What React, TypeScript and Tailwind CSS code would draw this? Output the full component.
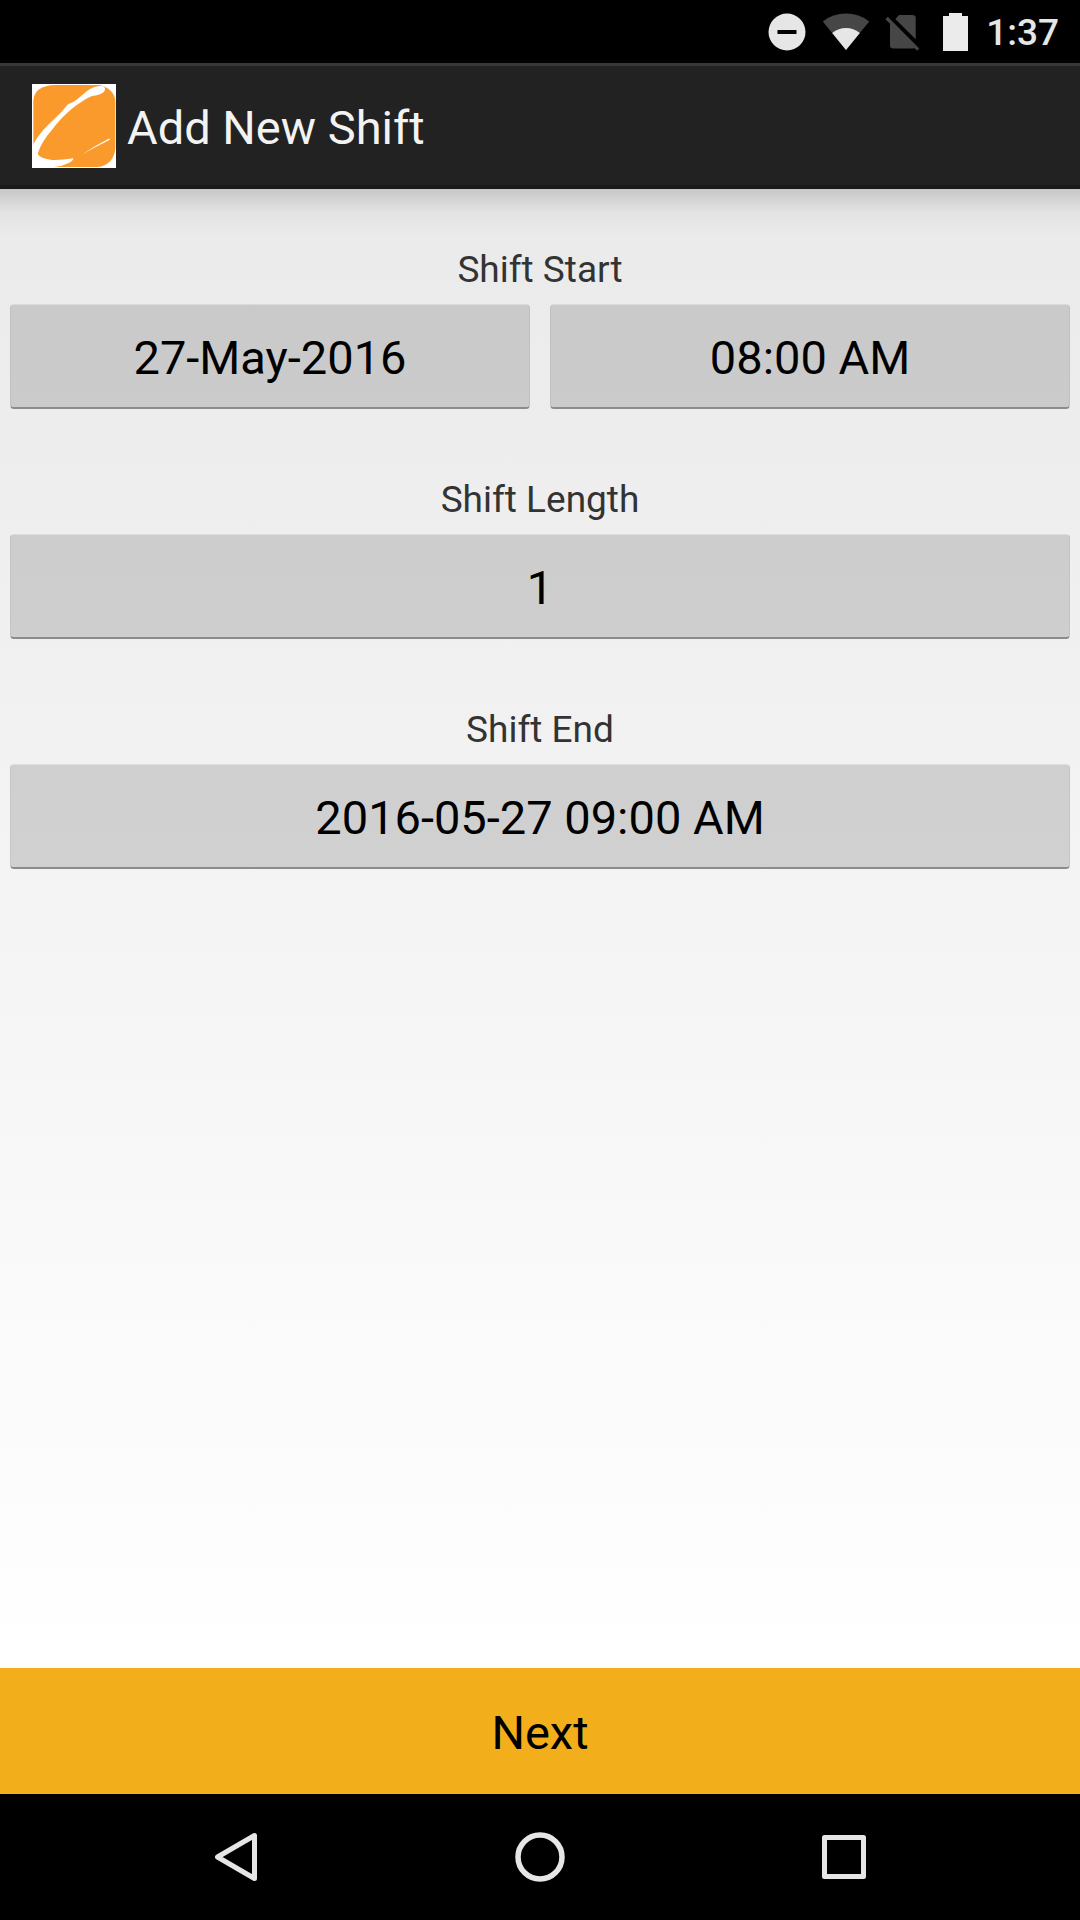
import type { ReactNode } from "react";

function StatusBar() {
  return (
    <div className="flex h-[63px] items-center justify-end bg-black pr-[21px]">
      <svg className="mr-4" width="38" height="38" viewBox="0 0 38 38" aria-label="Do not disturb">
        <circle cx="19" cy="19" r="18.5" fill="#e6e6e6" />
        <rect x="9.5" y="17" width="19" height="4" fill="#000" />
      </svg>
      <svg className="mr-[15px]" width="48" height="38" viewBox="0 0 48 38" aria-label="Wi-Fi">
        <path d="M24 37 L0.8 8.4 Q11 0.6 24 0.6 Q37 0.6 47.2 8.4 Z" fill="#464646" />
        <path d="M24 37 L10.2 20 Q16.5 15 24 15 Q31.5 15 37.8 20 Z" fill="#e6e6e6" />
      </svg>
      <svg className="mr-[22px]" width="36" height="38" viewBox="0 0 36 38" aria-label="No SIM card">
        <path d="M10.3 6 L14 2 H27.5 Q30.7 2 30.7 5 V26.2 Z" fill="#464646" />
        <path d="M5 9.5 L30 34.5 Q29.3 35.5 28 35.5 H8.5 Q5 35.5 5 32.5 Z" fill="#464646" />
        <path d="M1.6 5 L33.2 36.6" stroke="#464646" strokeWidth="3.2" />
      </svg>
      <svg className="mr-[18px]" width="25" height="38" viewBox="0 0 25 38" aria-label="Battery">
        <path d="M6 0 H19 V3 H25 V38 H0 V3 H6 Z" fill="#ebebeb" />
      </svg>
      <span className="pt-[2px] text-[37px] leading-none font-medium text-[#e6e6e6]">1:37</span>
    </div>
  );
}

function Logo() {
  return (
    <svg width="84" height="84" viewBox="0 0 252 252" aria-hidden="true">
      <rect width="252" height="252" fill="#fff" />
      <path
        d="M4 50 C5 22 28 3 70 3 H200 C225 6 248 25 250 50 V192 C248 225 228 247 196 249 H4 Z"
        fill="#fb9a2c"
      />
      <path
        d="M0 190 C14 158 38 132 66 106 Q90 84 108 61 Q124 55 134 47 L166 20 Q186 5 212 6 Q222 10 218 20 Q212 31 180 36 Q160 44 142 58 C110 80 82 108 62 135 Q26 176 17 210 Q24 224 60 228 Q90 229 124 223 Q125 229 112 236 Q90 247 67 249 V252 H0 Z"
        fill="#fff"
      />
      <path d="M151 211 Q190 184 230 164 L235 164 L231 169 Q190 189 151 211 Z" fill="#fff" />
    </svg>
  );
}

function PickerButton({ id, labelId, children }: { id: string; labelId: string; children: ReactNode }) {
  return (
    <button
      id={id}
      type="button"
      aria-labelledby={`${labelId} ${id}`}
      className="h-[105px] flex-1 rounded-[4px] border-x border-t border-b-2 border-x-black/5 border-t-white/30 border-b-[#8c8c8c] bg-black/14 pt-[2px] text-[47px] leading-none text-black"
    >
      {children}
    </button>
  );
}

function Field({ id, label, values }: { id: string; label: string; values: string[] }) {
  return (
    <section className="flex flex-col gap-3">
      <h2 id={id} className="text-center text-[37px] leading-[44px] text-[#333333]">
        {label}
      </h2>
      <div className="flex gap-5">
        {values.map((value, i) => (
          <PickerButton key={value} id={`${id}-${i}`} labelId={id}>
            {value}
          </PickerButton>
        ))}
      </div>
    </section>
  );
}

function NavBar() {
  return (
    <nav className="grid h-[126px] grid-cols-3 bg-black px-[84px]">
      <button type="button" aria-label="Back" className="flex items-center justify-center">
        <svg width="50" height="50" viewBox="0 0 50 50" fill="none" stroke="#e6e6e6" strokeWidth="5" strokeLinejoin="round">
          <path d="M43.5 3.5 V46.5 L6.5 25 Z" />
        </svg>
      </button>
      <button type="button" aria-label="Home" className="flex items-center justify-center">
        <svg width="50" height="50" viewBox="0 0 50 50" fill="none" stroke="#e6e6e6" strokeWidth="5.5">
          <circle cx="25" cy="25" r="22" />
        </svg>
      </button>
      <button type="button" aria-label="Recent apps" className="flex items-center justify-center">
        <svg width="50" height="50" viewBox="0 0 50 50" fill="none" stroke="#e6e6e6" strokeWidth="5" strokeLinejoin="round">
          <rect x="5.5" y="5.5" width="39" height="39" />
        </svg>
      </button>
    </nav>
  );
}

export default function App() {
  return (
    <div className="flex min-h-screen flex-col bg-white font-['Roboto',sans-serif]">
      <StatusBar />
      <header className="flex h-[126px] items-center gap-[11px] border-t-3 border-b-4 border-t-[#383838] border-b-[#1b1b1b] bg-[#222222] pl-8">
        <Logo />
        <h1 className="pt-1 text-[47px] leading-none text-[#f3f3f3]">Add New Shift</h1>
      </header>
      <main className="flex flex-1 flex-col bg-linear-to-b from-[#eaeaea] to-white">
        <div className="h-[59px] bg-linear-to-b from-black/15 via-black/3 via-40% to-transparent to-80%" />
        <div className="flex flex-col gap-[69px] px-[10px]">
          <Field id="shift-start" label="Shift Start" values={["27-May-2016", "08:00 AM"]} />
          <Field id="shift-length" label="Shift Length" values={["1"]} />
          <Field id="shift-end" label="Shift End" values={["2016-05-27 09:00 AM"]} />
        </div>
      </main>
      <button type="button" className="h-[126px] w-full bg-[#f3ae1b] pt-[2px] text-[47px] leading-none text-black">
        Next
      </button>
      <NavBar />
    </div>
  );
}
